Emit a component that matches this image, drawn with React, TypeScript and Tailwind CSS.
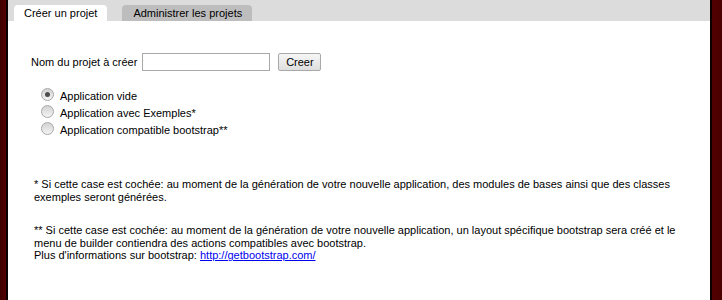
import React from "react";

const options = [
	{ label: "Application vide", checked: true },
	{ label: "Application avec Exemples*", checked: false },
	{ label: "Application compatible bootstrap**", checked: false },
];

const Radio: React.FC<{ checked: boolean }> = ({ checked }) => (
	<span className="relative -top-[2px] flex h-[13px] w-[13px] items-center justify-center rounded-full border border-[#a7a7a7] bg-gradient-to-b from-[#d2d2d2] to-[#f4f4f4]">
		{checked && <span className="h-[5px] w-[5px] rounded-full bg-[#4d4d4d]" />}
	</span>
);

const App: React.FC = () => {
	return (
		<div className="flex h-[300px] w-[722px] bg-[#4c0000] font-['Liberation_Sans',Arial,sans-serif] text-[11px] text-black">
			<div className="w-[6px] bg-gradient-to-r from-[#3f0000] to-[#520000]" />
			<div className="w-[2px] bg-[#0a0000]" />
			<div className="flex flex-1 flex-col bg-white">
				<div className="flex h-[21px] items-end gap-[15px] bg-[#dcdcdc] pl-[6px]">
					<div className="flex h-[16px] items-center rounded-t-[4px] bg-white pl-[10px] pr-[10px] pt-[1px]">
						Créer un projet
					</div>
					<div className="flex h-[16px] items-center rounded-t-[4px] bg-[#bdbdbd] pl-[11px] pr-[10px] pt-[1px]">
						Administrer les projets
					</div>
				</div>

				<div className="mt-[32px] flex items-center pl-[23px]">
					<span>Nom du projet à créer</span>
					<input
						type="text"
						className="ml-[5px] h-[18px] w-[128px] border border-[#a9a9a9] bg-white px-[2px] outline-none"
					/>
					<button className="ml-[8px] flex h-[18px] w-[43px] items-center justify-center rounded-[2px] border border-[#a9a9a9] bg-gradient-to-b from-[#f6f6f6] to-[#dedede]">
						Creer
					</button>
				</div>

				<div className="mt-[17px] flex flex-col pl-[33px]">
					{options.map((o) => (
						<label key={o.label} className="flex h-[17px] items-center gap-[6px]">
							<Radio checked={o.checked} />
							<span>{o.label}</span>
						</label>
					))}
				</div>

				<div className="mt-[39px] pl-[26px] pr-[30px] leading-[12.6px]">
					<p>
						* Si cette case est cochée: au moment de la génération de votre nouvelle application, des
						modules de bases ainsi que des classes exemples seront générées.
					</p>
					<p className="mt-[21px]">
						** Si cette case est cochée: au moment de la génération de votre nouvelle application, un
						layout spécifique bootstrap sera créé et le menu de builder contiendra des actions
						compatibles avec bootstrap.
						<br />
						Plus d'informations sur bootstrap:{" "}
						<a href="#" className="text-[#0000ee] underline">
							http://getbootstrap.com/
						</a>
					</p>
				</div>
			</div>
			<div className="w-[2px] bg-[#0a0000]" />
			<div className="w-[10px] bg-gradient-to-r from-[#520000] to-[#4a0000]" />
		</div>
	);
};

export default App;
